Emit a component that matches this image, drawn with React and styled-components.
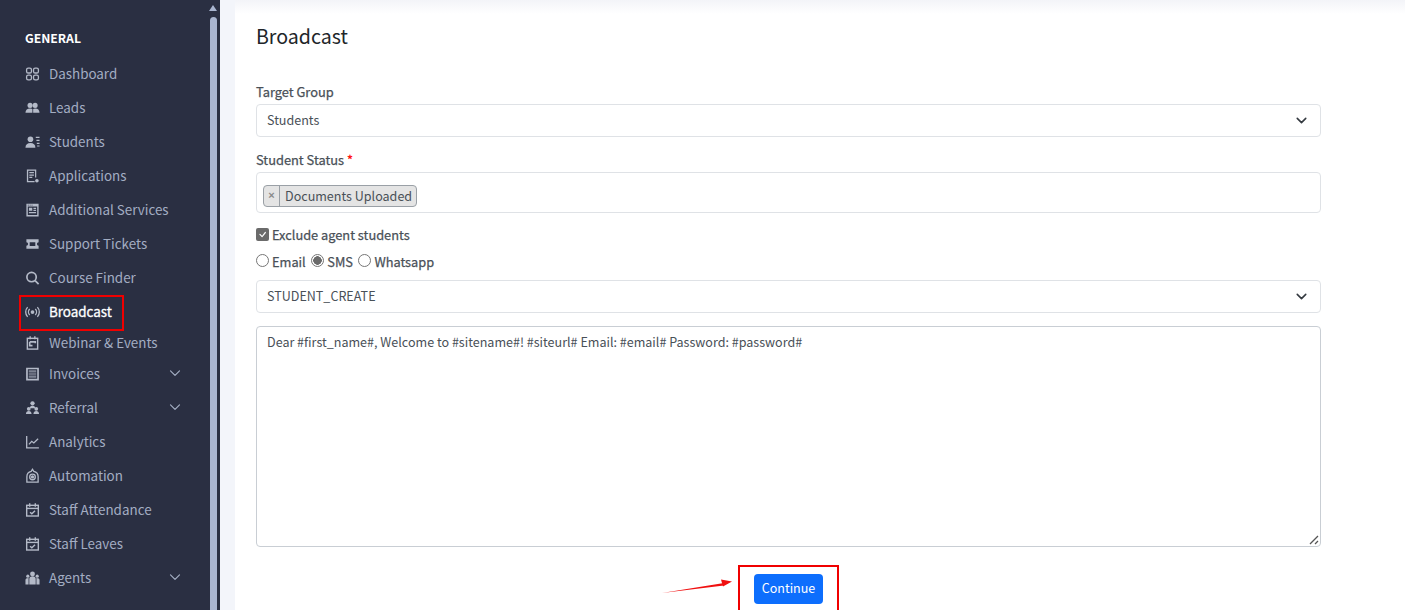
import React from "react";
import styled, { createGlobalStyle } from "styled-components";
import { LuChevronDown } from "react-icons/lu";
import { BsCheck } from "react-icons/bs";

const fontStack = `"Noto Sans CJK SC", "Noto Sans", "Liberation Sans", sans-serif`;

const GlobalStyle = createGlobalStyle`
  html, body {
    margin: 0;
    padding: 0;
    height: 610px;
    overflow: hidden;
    background: #fff;
    font-family: ${fontStack};
  }
  * { box-sizing: border-box; }
`;

const Glyph = ({ children, stroke }) => (
  <svg
    viewBox="0 0 16 16"
    width="16"
    height="16"
    fill={stroke ? "none" : "currentColor"}
    stroke={stroke ? "currentColor" : "none"}
    strokeWidth={stroke}
  >
    {children}
  </svg>
);

const DashIcon = () => (
  <Glyph stroke="1.4">
    <rect x="1.7" y="1.7" width="5.2" height="5.2" rx="1.7" />
    <rect x="9.1" y="1.7" width="5.2" height="5.2" rx="1.7" />
    <rect x="1.7" y="9.1" width="5.2" height="5.2" rx="1.7" />
    <rect x="9.1" y="9.1" width="5.2" height="5.2" rx="1.7" />
  </Glyph>
);

const LeadsIcon = () => (
  <Glyph>
    <circle cx="5.4" cy="5.2" r="2.7" />
    <circle cx="10.8" cy="5.2" r="2.7" />
    <path d="M.5 13c0-3 2-4.6 4.9-4.6 1.3 0 2.2.3 2.9 1 .7-.7 1.6-1 2.6-1 2.9 0 4.6 1.6 4.6 4.6z" />
    <path d="M7.9 8.2h.8v5h-.8z" fill="#2a2f42" />
  </Glyph>
);

const StudentsIcon = () => (
  <Glyph>
    <circle cx="5.8" cy="5" r="3" />
    <path d="M.5 14c0-3.4 2.1-5 5.3-5s5.3 1.6 5.3 5z" />
    <path d="M11.5 2.5h4v1.3h-4zM12.2 5.6h3.3v1.3h-3.3zM12.6 8.7h2.9V10h-2.9zM12.9 11.6h2.6v1.3h-2.6z" />
  </Glyph>
);

const AppIcon = () => (
  <Glyph>
    <path d="M2 1h10v8.7h-1.3V2.4H3.4v10.8h6.8v1.4H2z" />
    <path d="M4.6 3.8h4.9v1.3H4.6zM4.6 6.3h4.9v1.3H4.6zM4.6 8.8h3.2v1.3H4.6z" />
    <circle cx="12.7" cy="13" r="1.9" />
  </Glyph>
);

const ServicesIcon = () => (
  <Glyph>
    <path
      fillRule="evenodd"
      d="M1.5 1.2h13v13.6h-13zM3 4.3v9h10v-9zM3 2.3v1h1v-1zM5 2.3v1h1v-1zM7 2.3v1h1v-1z"
    />
    <path d="M4.2 5.6h3.6v3.2H4.2zM9 5.6h2.8v1.2H9zM9 7.8h2.8V9H9zM4.2 10.2h7.6v1.2H4.2z" />
  </Glyph>
);

const TicketIcon = () => (
  <Glyph>
    <path
      fillRule="evenodd"
      d="M1.5 3h13v3.2a1.8 1.8 0 0 0 0 3.6V13h-13V9.8a1.8 1.8 0 0 0 0-3.6zM5 6v4h6V6z"
    />
  </Glyph>
);

const SearchIcon = () => (
  <Glyph stroke="1.8">
    <circle cx="7" cy="7" r="5" />
    <path d="M10.8 10.8 14.5 14.5" />
  </Glyph>
);

const BroadcastIcon = () => (
  <Glyph stroke="1.4">
    <circle cx="8" cy="8" r="2" fill="currentColor" stroke="none" />
    <path d="M5 4.8a4.6 4.6 0 0 0 0 6.4M11 4.8a4.6 4.6 0 0 1 0 6.4" />
    <path d="M2.8 2.8a7.6 7.6 0 0 0 0 10.4M13.2 2.8a7.6 7.6 0 0 1 0 10.4" />
  </Glyph>
);

const WebinarIcon = () => (
  <Glyph stroke="1.5">
    <rect x="2.5" y="3" width="11" height="11.5" />
    <path d="M5.5 .8v3.2M10.5 .8v3.2" />
    <path d="M5 6.8h6v1.5M5 6.8v4h3" strokeWidth="1.7" />
  </Glyph>
);

const InvoiceIcon = () => (
  <Glyph>
    <path
      fillRule="evenodd"
      d="M1.2 1.2h13.6v13.6H1.2zM3 3v10h10V3z"
    />
    <path d="M4 4h8v2.4H4zM4 7.2h8v1.6H4zM4 9.6h8V12H4z" opacity="0.6" />
  </Glyph>
);

const ReferralIcon = () => (
  <Glyph>
    <circle cx="8" cy="3" r="2.3" />
    <path d="M5.2 8.2c0-2 1.2-2.6 2.8-2.6s2.8.6 2.8 2.6z" />
    <circle cx="4" cy="8.8" r="2" />
    <circle cx="12" cy="8.8" r="2" />
    <path d="M1 14.5c0-2.6 1.2-3.4 3-3.4s3 .8 3 3.4zM9 14.5c0-2.6 1.2-3.4 3-3.4s3 .8 3 3.4z" />
  </Glyph>
);

const AnalyticsIcon = () => (
  <Glyph stroke="1.4">
    <path d="M1.8 1.5v12.7h13" />
    <path d="M4.2 10.5l3-3.2 2.2 1.7 4.6-4.5" />
  </Glyph>
);

const AutomationIcon = () => (
  <Glyph stroke="1.4">
    <path d="M8 .8 9.4 3C12.4 3.7 14 6 14 8.7V14.6H2V8.7C2 6 3.6 3.7 6.6 3z" />
    <circle cx="8" cy="9" r="3" />
    <circle cx="8" cy="9" r="1" fill="currentColor" />
  </Glyph>
);

const CalendarCheckIcon = () => (
  <Glyph stroke="1.5">
    <rect x="1.8" y="3" width="12.4" height="11.4" />
    <path d="M1.8 6.3h12.4" />
    <path d="M5 .8v3.6M11 .8v3.6" />
    <path d="M5.4 10.4l1.9 1.7 3.4-3.4" />
  </Glyph>
);

const AgentsIcon = () => (
  <Glyph>
    <circle cx="8" cy="3.6" r="2.6" />
    <path d="M4.6 14.8V9c0-2 1.4-3 3.4-3s3.4 1 3.4 3v5.8z" />
    <circle cx="3" cy="6" r="1.7" />
    <circle cx="13" cy="6" r="1.7" />
    <path d="M.5 14.8v-4.6c0-1.5 1-2.3 3.3-2.3v6.9zM15.5 14.8v-4.6c0-1.5-1-2.3-3.3-2.3v6.9z" />
  </Glyph>
);

const menu = [
  { label: "Dashboard", icon: <DashIcon />, height: 34 },
  { label: "Leads", icon: <LeadsIcon />, height: 34 },
  { label: "Students", icon: <StudentsIcon />, height: 34 },
  { label: "Applications", icon: <AppIcon />, height: 34 },
  { label: "Additional Services", icon: <ServicesIcon />, height: 34 },
  { label: "Support Tickets", icon: <TicketIcon />, height: 34 },
  { label: "Course Finder", icon: <SearchIcon />, height: 34 },
  { label: "Broadcast", icon: <BroadcastIcon />, height: 34, active: true },
  { label: "Webinar & Events", icon: <WebinarIcon />, height: 28 },
  { label: "Invoices", icon: <InvoiceIcon />, height: 34, caret: true },
  { label: "Referral", icon: <ReferralIcon />, height: 34, caret: true },
  { label: "Analytics", icon: <AnalyticsIcon />, height: 34 },
  { label: "Automation", icon: <AutomationIcon />, height: 34 },
  { label: "Staff Attendance", icon: <CalendarCheckIcon />, height: 34 },
  { label: "Staff Leaves", icon: <CalendarCheckIcon />, height: 34 },
  { label: "Agents", icon: <AgentsIcon />, height: 34, caret: true },
];

export default function App() {
  return (
    <Page>
      <GlobalStyle />
      <Sidebar>
        <Nav>
          <NavTitle>GENERAL</NavTitle>
          {menu.map((item) => (
            <NavItem key={item.label} $height={item.height} $active={item.active}>
              <NavIcon>{item.icon}</NavIcon>
              <NavLabel>{item.label}</NavLabel>
              {item.caret && (
                <Caret>
                  <LuChevronDown size={18} strokeWidth={1.6} />
                </Caret>
              )}
              {item.active && <RedBox />}
            </NavItem>
          ))}
        </Nav>
        <ScrollRail>
          <ScrollArrow />
          <ScrollThumb />
        </ScrollRail>
      </Sidebar>
      <Gutter />
      <Main>
        <Title>Broadcast</Title>
        <Form>
          <Field>
            <Label>Target Group</Label>
            <SelectBox>
              Students
              <SelectCaret>
                <LuChevronDown size={17} strokeWidth={2.2} />
              </SelectCaret>
            </SelectBox>
          </Field>
          <Field>
            <Label>
              Student Status <Req>*</Req>
            </Label>
            <TagBox>
              <Tag>
                <TagClose>×</TagClose>
                <TagText>Documents Uploaded</TagText>
              </Tag>
            </TagBox>
          </Field>
          <CheckRow>
            <CheckMark>
              <BsCheck size={15} />
            </CheckMark>
            Exclude agent students
          </CheckRow>
          <RadioRow>
            <RadioItem>
              <Radio />
              Email
            </RadioItem>
            <RadioItem>
              <Radio $checked />
              SMS
            </RadioItem>
            <RadioItem>
              <Radio />
              Whatsapp
            </RadioItem>
          </RadioRow>
          <SelectBox>
            STUDENT_CREATE
            <SelectCaret>
              <LuChevronDown size={17} strokeWidth={2.2} />
            </SelectCaret>
          </SelectBox>
          <MessageBox>
            Dear #first_name#, Welcome to #sitename#! #siteurl# Email: #email# Password: #password#
            <Resize viewBox="0 0 10 10" width="10" height="10">
              <path d="M1 9 9 1M6 9l3-3" stroke="#555" strokeWidth="1.3" fill="none" />
            </Resize>
          </MessageBox>
          <Actions>
            <ContinueFrame>
              <ContinueButton>Continue</ContinueButton>
              <Arrow viewBox="0 0 80 20" width="80" height="20">
                <path d="M1 18 L63 8 L63 10.5 Z" fill="#f01010" />
                <path d="M60 4.5 L71 6.5 L62 11.5 Z" fill="#f01010" />
              </Arrow>
            </ContinueFrame>
          </Actions>
        </Form>
      </Main>
    </Page>
  );
}

const Page = styled.div`
  display: flex;
  width: 1405px;
  height: 610px;
  overflow: hidden;
`;

const Sidebar = styled.aside`
  display: flex;
  flex: 0 0 220px;
  height: 610px;
  background: #2a2f42;
`;

const Nav = styled.nav`
  flex: 0 0 210px;
  padding: 29px 0 0 25px;
`;

const NavTitle = styled.div`
  height: 28px;
  font-size: 12.2px;
  line-height: 18px;
  font-weight: 700;
  color: #fff;
`;

const NavItem = styled.div`
  position: relative;
  display: flex;
  align-items: center;
  height: ${({ $height }) => $height}px;
  font-size: 13.4px;
  line-height: 20px;
  font-weight: 400;
  color: ${({ $active }) => ($active ? "#fff" : "#a3adc2")};
  -webkit-text-stroke: ${({ $active }) => ($active ? "0.3px #fff" : "0")};
`;

const NavIcon = styled.span`
  display: flex;
  justify-content: center;
  width: 15px;
  margin-right: 9px;
  -webkit-text-stroke: 0;
  color: #b4bac8;
`;

const NavLabel = styled.span`
  padding-bottom: 2px;
`;

const Caret = styled.span`
  display: flex;
  position: absolute;
  left: 141px;
  top: 50%;
  transform: translateY(-55%);
`;

const RedBox = styled.span`
  position: absolute;
  left: -6px;
  top: 0;
  width: 105px;
  height: 36px;
  border: 2px solid #f00000;
`;

const ScrollRail = styled.div`
  position: relative;
  flex: 0 0 7px;
  padding-top: 17px;
`;

const ScrollArrow = styled.div`
  position: absolute;
  top: 5px;
  left: -1px;
  width: 0;
  height: 0;
  border-left: 4.5px solid transparent;
  border-right: 4.5px solid transparent;
  border-bottom: 6px solid #a9b5d0;
`;

const ScrollThumb = styled.div`
  height: 600px;
  border-radius: 4px 4px 0 0;
  background: #a9b5d0;
`;

const Gutter = styled.div`
  flex: 0 0 15px;
  background: #f3f5fa;
`;

const Main = styled.main`
  flex: 1;
  padding: 0 84px 0 21px;
  background: linear-gradient(#f3f4f8, #fff 14px);
`;

const Title = styled.h1`
  margin: 0;
  padding-top: 21px;
  height: 83px;
  font-size: 19.6px;
  line-height: 29px;
  font-weight: 400;
  color: #212529;
`;

const Form = styled.form`
  display: flex;
  flex-direction: column;
`;

const Field = styled.div`
  margin-bottom: 14px;
`;

const Label = styled.div`
  height: 21px;
  font-size: 12.85px;
  line-height: 17px;
  color: #495057;
  -webkit-text-stroke: 0.25px #495057;
`;

const Req = styled.span`
  color: #f00;
  -webkit-text-stroke: 0.25px #f00;
`;

const SelectBox = styled.div`
  position: relative;
  height: 33px;
  padding: 0 10px;
  font-size: 12.55px;
  line-height: 29px;
  color: #495057;
  border: 1px solid #dfe2e6;
  border-radius: 4px;
  background: #fff;
`;

const SelectCaret = styled.span`
  position: absolute;
  display: flex;
  right: 10px;
  top: 7px;
  color: #343a40;
`;

const TagBox = styled.div`
  display: flex;
  align-items: flex-end;
  height: 41px;
  padding: 0 0 5px 6px;
  border: 1px solid #dfe2e6;
  border-radius: 4px;
`;

const Tag = styled.div`
  display: flex;
  height: 22px;
  border: 1px solid #9aa0a6;
  border-radius: 4px;
  background: #e4e4e4;
  font-size: 12.55px;
  line-height: 19px;
  color: #495057;
`;

const TagClose = styled.span`
  width: 16px;
  text-align: center;
  border-right: 1px solid #9aa0a6;
  color: #8a8a8a;
  font-family: "Liberation Sans", sans-serif;
  font-size: 11px;
  font-weight: 700;
`;

const TagText = styled.span`
  padding: 0 4px 0 5px;
`;

const CheckRow = styled.div`
  display: flex;
  align-items: center;
  gap: 3px;
  height: 20px;
  margin-top: -3px;
  font-size: 12.8px;
  line-height: 19px;
  color: #495057;
  -webkit-text-stroke: 0.25px #495057;
`;

const CheckMark = styled.span`
  display: flex;
  align-items: center;
  justify-content: center;
  width: 13px;
  height: 13px;
  border-radius: 2px;
  background: #6b6b6b;
  color: #fff;
`;

const RadioRow = styled.div`
  display: flex;
  gap: 5.5px;
  height: 20px;
  margin: 7px 0 9px;
  font-size: 12.8px;
  line-height: 19px;
  color: #495057;
  -webkit-text-stroke: 0.25px #495057;
`;

const RadioItem = styled.label`
  display: flex;
  align-items: center;
  gap: 3px;
`;

const Radio = styled.span`
  width: 13px;
  height: 13px;
  margin-top: -2px;
  border: 1px solid #767676;
  border-radius: 50%;
  background: ${({ $checked }) => ($checked ? "radial-gradient(circle, #6b6b6b 0 4px, #fff 4.5px)" : "#fff")};
`;

const MessageBox = styled.div`
  position: relative;
  height: 221px;
  margin-top: 13px;
  padding: 5px 10px;
  font-size: 12.55px;
  line-height: 20px;
  color: #495057;
  border: 1px solid #c9ced4;
  border-radius: 4px;
`;

const Resize = styled.svg`
  position: absolute;
  right: 1px;
  bottom: 1px;
`;

const Actions = styled.div`
  display: flex;
  justify-content: center;
  margin-top: 18px;
`;

const ContinueFrame = styled.div`
  position: relative;
  padding: 7px 14px;
  border: 2px solid #f00000;
`;

const ContinueButton = styled.button`
  display: block;
  width: 69px;
  height: 30px;
  padding: 0 0 3px;
  font: 400 12.5px ${fontStack};
  color: #fff;
  border: 0;
  border-radius: 4px;
  background: #0d6efd;
`;

const Arrow = styled.svg`
  position: absolute;
  left: -79px;
  top: 8px;
`;
